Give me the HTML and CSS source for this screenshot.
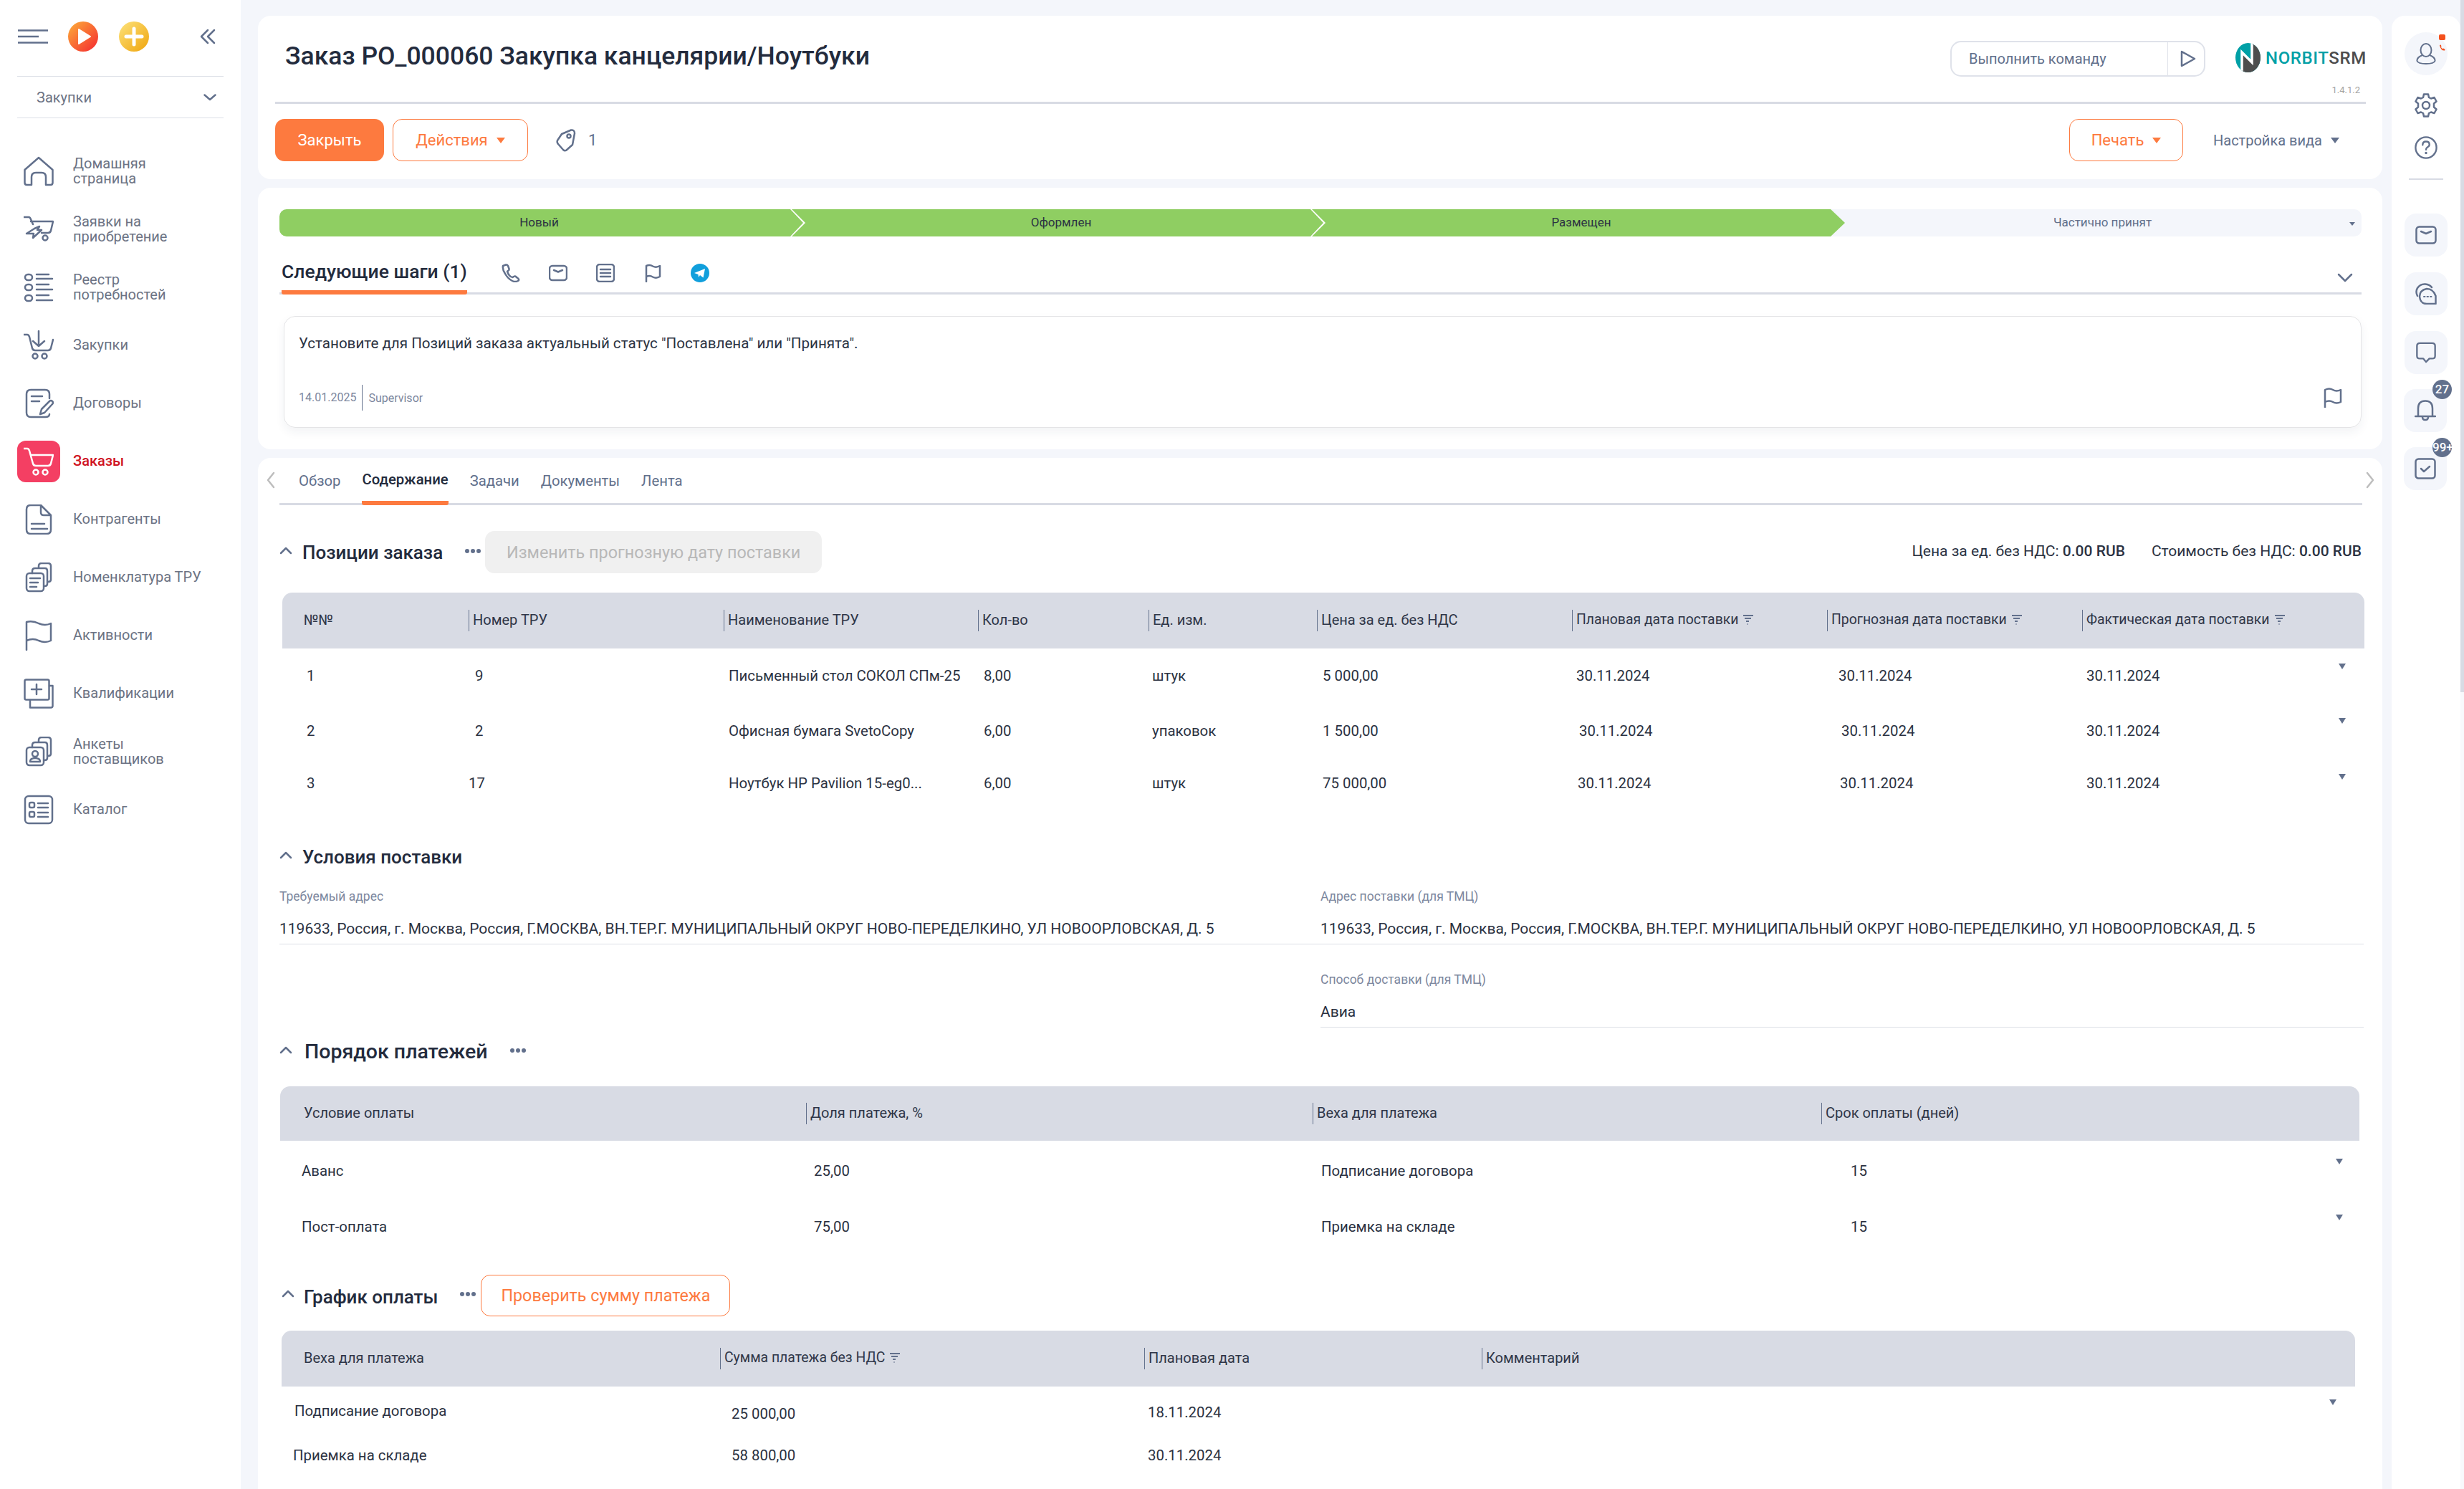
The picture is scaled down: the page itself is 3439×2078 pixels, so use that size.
FILE: index.html
```html
<!DOCTYPE html>
<html lang="ru">
<head>
  <meta charset="UTF-8" />
  <title>Заказ PO_000060</title>
  <link rel="stylesheet" href="styles.css">
</head>
<body>

  <!-- left menu -->
  <aside class="sidebar">
    <div class="side-top">
      <svg class="burger" viewBox="0 0 42 20"><path d="M0 1.5H42M0 10H29M0 18.500H42"/></svg>
      <svg class="round-btn" viewBox="0 0 42 42"><defs><linearGradient id="gp" x1="0" y1="0" x2="1" y2="1"><stop offset="0" stop-color="#fdb03a"/><stop offset="1" stop-color="#f4272f"/></linearGradient></defs><circle cx="21" cy="21" r="21" fill="url(#gp)"/><path d="M15 11 L31 21 L15 31Z" fill="#fff" stroke="#fff" stroke-width="2" stroke-linejoin="round"/></svg>
      <svg class="round-btn second" viewBox="0 0 42 42"><defs><linearGradient id="gy" x1="0" y1="0" x2="1" y2="1"><stop offset="0" stop-color="#fde37c"/><stop offset="1" stop-color="#efa40c"/></linearGradient></defs><circle cx="21" cy="21" r="21" fill="url(#gy)"/><path d="M21 10V32M10 21H32" stroke="#fff" stroke-width="5" stroke-linecap="round"/></svg>
      <svg class="collapse" viewBox="0 0 22 22"><path d="M11 2 L2 11 L11 20M20 2 L11 11 L20 20"/></svg>
    </div>
    <div class="side-select">
      <span>Закупки</span>
      <svg viewBox="0 0 18 10"><path d="M1.500 1.500 L9 8 L16.500 1.500"/></svg>
    </div>
    <nav class="menu">
      <a class="menu-item">
        <svg viewBox="0 0 42 42"><path d="M1.500 19 L21 2 L40.500 19 V37 Q40.500 40 37.500 40 H31 V29 Q31 23 25 23 H17 Q11 23 11 29 V40 H4.500 Q1.500 40 1.500 37Z"/></svg>
        <span>Домашняя<br>страница</span>
      </a>
      <a class="menu-item">
        <svg viewBox="0 0 42 42"><path d="M0 4 H7 Q9 4 10 7 L13 14 M10 10 H41 L38 23 Q37 26 34 26 H25"/><path d="M15 20 L22 17 L19 22 H25 L13 33 L14 27 H4Z"/><circle cx="30" cy="33" r="3.500"/></svg>
        <span>Заявки на<br>приобретение</span>
      </a>
      <a class="menu-item">
        <svg viewBox="0 0 42 42"><rect x="2" y="3" width="10" height="8" rx="4"/><rect x="2" y="17" width="10" height="8" rx="4"/><rect x="2" y="32" width="10" height="8" rx="4"/><path d="M18 3H35M18 9H40M18 17H35M18 24H40M18 32H35M18 39H40"/></svg>
        <span>Реестр<br>потребностей</span>
      </a>
      <a class="menu-item">
        <svg viewBox="0 0 42 42"><path d="M0 6 H5 Q7 6 8 9 L12 25 Q13 28 16 28 H34 Q37 28 38 25 L41 13 M21 1 V22 M13 15 L21 22 L29 15"/><circle cx="16" cy="36" r="3.500"/><circle cx="29" cy="36" r="3.500"/></svg>
        <span>Закупки</span>
      </a>
      <a class="menu-item">
        <svg viewBox="0 0 42 42"><path d="M36 14 V8 Q36 2 30 2 H10 Q4 2 4 8 V34 Q4 40 10 40 H30 Q36 40 36 36"/><path d="M11 11H26M11 18H22"/><path d="M23 36 L25 29 L36 18 Q38 16 40 18 Q42 20 40 22 L29 34Z"/></svg>
        <span>Договоры</span>
      </a>
      <a class="menu-item active">
        <span class="active-box">
          <svg viewBox="0 0 42 42"><path d="M0 3 H5 Q7 3 8 6 L13 24 Q14 27 17 27 H34 Q37 27 38 24 L41 12 H10"/><circle cx="17" cy="36" r="3.500"/><circle cx="30" cy="36" r="3.500"/></svg>
        </span>
        <span>Заказы</span>
      </a>
      <a class="menu-item">
        <svg viewBox="0 0 42 42"><path d="M24 1 H10 Q4 1 4 7 V35 Q4 41 10 41 H32 Q38 41 38 35 V15Z M24 1 V11 Q24 15 28 15 H38"/><path d="M11 27H29M11 34H33"/></svg>
        <span>Контрагенты</span>
      </a>
      <a class="menu-item">
        <svg viewBox="0 0 42 42"><rect x="4" y="15" width="24" height="25" rx="4"/><path d="M12 15 V12 Q12 8 16 8 H30 Q33 8 33 12 V30 Q33 33 29 33 M21 8 V5 Q21 1 25 1 H34 Q38 1 38 5 V24 Q38 27 34 27"/><path d="M9 22H23M9 28H20M9 34H18"/></svg>
        <span>Номенклатура ТРУ</span>
      </a>
      <a class="menu-item">
        <svg viewBox="0 0 42 42"><path d="M4 41 V2 Q13 0 21 4 Q30 8 38 4 V28 Q30 32 21 28 Q13 24 4 28"/></svg>
        <span>Активности</span>
      </a>
      <a class="menu-item">
        <svg viewBox="0 0 42 42"><rect x="1.500" y="1.500" width="34" height="28" rx="2"/><path d="M36 10 H40.500 V38 Q40.500 40.500 38 40.500 H9 V30 M18 8 V22 M11 15 H25"/></svg>
        <span>Квалификации</span>
      </a>
      <a class="menu-item">
        <svg viewBox="0 0 42 42"><rect x="4" y="15" width="24" height="25" rx="4"/><path d="M12 15 V12 Q12 8 16 8 H30 Q33 8 33 12 V30 Q33 33 29 33 M21 8 V5 Q21 1 25 1 H34 Q38 1 38 5 V24 Q38 27 34 27"/><circle cx="16" cy="24" r="4"/><path d="M9 35 Q9 30 16 30 Q23 30 23 35 Z"/></svg>
        <span>Анкеты<br>поставщиков</span>
      </a>
      <a class="menu-item">
        <svg viewBox="0 0 42 42"><rect x="2" y="2" width="38" height="38" rx="5"/><rect x="8" y="11" width="7" height="7" rx="2"/><rect x="8" y="24" width="7" height="7" rx="2"/><path d="M20 12H34M20 18H34M20 25H34M20 31H34"/></svg>
        <span>Каталог</span>
      </a>
    </nav>
  </aside>

  <main class="content">

    <section class="card head-card">
      <div class="head-top">
        <h1>Заказ PO_000060 Закупка канцелярии/Ноутбуки</h1>
        <div class="command">
          <span class="command-text">Выполнить команду</span>
          <svg viewBox="0 0 22 24"><path d="M2 2 L20 12 L2 22Z"/></svg>
        </div>
        <div class="logo-box">
          <div class="logo">
            <svg viewBox="0 0 35 41"><defs><clipPath id="logoclip"><ellipse cx="17.500" cy="20.500" rx="17.500" ry="20.500"/></clipPath></defs><g clip-path="url(#logoclip)"><rect width="35" height="41" fill="#00a0a6"/><path d="M23 0 H35 V41 H9 V14 L23 28Z" fill="#4d4d4d"/><path d="M9 41 V13 L23 27 V0" fill="none" stroke="#fff" stroke-width="3.500" stroke-linecap="butt" stroke-linejoin="miter"/></g></svg>
            <span class="logo-name">NORBIT<b>SRM</b></span>
          </div>
          <div class="version">1.4.1.2</div>
        </div>
      </div>
      <div class="head-actions">
        <button class="btn btn-fill">Закрыть</button>
        <button class="btn btn-line actions-btn">Действия<i class="caret orange"></i></button>
        <svg class="tag" viewBox="0 0 30 32"><path d="M9 7 L22 1.500 Q27 1 27 6 L24 22 L15 30 Q13 31 11 29 L4 21 Q2 19 3 16Z"/><circle cx="19" cy="10" r="2.500"/></svg>
        <span class="tag-count">1</span>
        <button class="btn btn-line print-btn">Печать<i class="caret orange"></i></button>
        <span class="view-set">Настройка вида<i class="caret"></i></span>
      </div>
    </section>

    <section class="card steps-card">
      <div class="steps">
        <div class="step done">Новый</div>
        <div class="step done">Оформлен</div>
        <div class="step done current">Размещен</div>
        <div class="step">Частично принят<i class="caret tiny"></i></div>
      </div>
      <div class="next-head">
        <div class="next-title">Следующие шаги (1)</div>
        <svg class="next-ico first" viewBox="0 0 26 26"><path d="M2 3 L6 1.500 Q8 1 9 3 L10.500 7 Q11 9 9 10 L8 11 Q9 14 11 16.500 Q13 19 15.500 19 L17 18 Q19 17 20.500 18.500 L23.500 21 Q25 23 23 24 Q19 26 15 24 Q9 21 5 14 Q1 8 2 3Z"/></svg>
        <svg class="next-ico" viewBox="0 0 26 26"><rect x="1" y="3" width="24" height="20" rx="4"/><path d="M7 9 L13 11.500 L19 9"/></svg>
        <svg class="next-ico" viewBox="0 0 26 26"><rect x="1" y="1" width="24" height="24" rx="4"/><path d="M6 8H20M6 13H20M6 18H20"/></svg>
        <svg class="next-ico" viewBox="0 0 26 26"><path d="M4 25 V3 Q9 1 13 3.500 Q18 6 23 3 V18 Q18 21 13 18.500 Q9 16 4 18"/></svg>
        <svg class="next-ico" viewBox="0 0 26 26"><circle class="tg-bg" cx="13" cy="13" r="13"/><path class="tg-plane" d="M5 13 L20 7 L17.500 19.500 L13 16 L11 19 L10.500 15Z"/></svg>
        <svg class="next-toggle" viewBox="0 0 22 14"><path d="M2 2 L11 11 L20 2"/></svg>
      </div>
      <div class="note">
        <div class="note-text">Установите для Позиций заказа актуальный статус "Поставлена" или "Принята".</div>
        <div class="note-foot">
          <span class="note-date">14.01.2025</span>
          <span class="note-user">Supervisor</span>
          <svg viewBox="0 0 26 28"><path d="M2 28 V3 Q8 0 13 3 Q18 6 24 3 V20 Q18 23 13 20 Q8 17 2 20"/></svg>
        </div>
      </div>
    </section>

    <section class="card body-card">
      <div class="tabs">
        <svg class="tab-arrow left" viewBox="0 0 12 24"><path d="M10 2 L2 12 L10 22"/></svg>
        <a class="tab">Обзор</a>
        <a class="tab active">Содержание</a>
        <a class="tab">Задачи</a>
        <a class="tab">Документы</a>
        <a class="tab">Лента</a>
        <svg class="tab-arrow right" viewBox="0 0 12 24"><path d="M2 2 L10 12 L2 22"/></svg>
      </div>

      <div class="sec-head first-sec">
        <svg class="sec-chev" viewBox="0 0 18 12"><path d="M2 10 L9 3 L16 10"/></svg>
        <h2>Позиции заказа</h2>
        <span class="dots"><i></i><i></i><i></i></span>
        <button class="btn btn-off">Изменить прогнозную дату поставки</button>
        <div class="totals">
          <span>Цена за ед. без НДС: <b>0.00 RUB</b></span>
          <span>Стоимость без НДС: <b>0.00 RUB</b></span>
        </div>
      </div>

      <div class="tbl tbl-items">
        <div class="tbl-row tbl-head">
          <div class="th th-first">№№</div>
          <div class="th">Номер ТРУ</div>
          <div class="th">Наименование ТРУ</div>
          <div class="th">Кол-во</div>
          <div class="th">Ед. изм.</div>
          <div class="th">Цена за ед. без НДС</div>
          <div class="th th-sort">Плановая дата поставки<svg class="fil" viewBox="0 0 14 14"><path d="M0 1H14M2 5H11M4 9H8M5.500 13H6.500"/></svg></div>
          <div class="th th-sort">Прогнозная дата поставки<svg class="fil" viewBox="0 0 14 14"><path d="M0 1H14M2 5H11M4 9H8M5.500 13H6.500"/></svg></div>
          <div class="th th-sort">Фактическая дата поставки<svg class="fil" viewBox="0 0 14 14"><path d="M0 1H14M2 5H11M4 9H8M5.500 13H6.500"/></svg></div>
        </div>
        <div class="tbl-row item-row r1">
          <div>1</div><div>9</div><div>Письменный стол СОКОЛ СПм-25</div><div>8,00</div><div>штук</div><div>5 000,00</div>
          <div>30.11.2024</div><div>30.11.2024</div><div>30.11.2024</div>
          <div class="row-menu"><i class="caret"></i></div>
        </div>
        <div class="tbl-row item-row r2">
          <div>2</div><div>2</div><div>Офисная бумага SvetoCopy</div><div>6,00</div><div>упаковок</div><div>1 500,00</div>
          <div>30.11.2024</div><div>30.11.2024</div><div>30.11.2024</div>
          <div class="row-menu"><i class="caret"></i></div>
        </div>
        <div class="tbl-row item-row r3">
          <div>3</div><div>17</div><div>Ноутбук HP Pavilion 15-eg0...</div><div>6,00</div><div>штук</div><div>75 000,00</div>
          <div>30.11.2024</div><div>30.11.2024</div><div>30.11.2024</div>
          <div class="row-menu"><i class="caret"></i></div>
        </div>
      </div>

      <div class="sec-head delivery-sec">
        <svg class="sec-chev" viewBox="0 0 18 12"><path d="M2 10 L9 3 L16 10"/></svg>
        <h2>Условия поставки</h2>
      </div>
      <div class="fields">
        <div class="field">
          <div class="field-label">Требуемый адрес</div>
          <div class="field-value">119633, Россия, г. Москва, Россия, Г.МОСКВА, ВН.ТЕР.Г. МУНИЦИПАЛЬНЫЙ ОКРУГ НОВО-ПЕРЕДЕЛКИНО, УЛ НОВООРЛОВСКАЯ, Д. 5</div>
        </div>
        <div class="field">
          <div class="field-label">Адрес поставки (для ТМЦ)</div>
          <div class="field-value">119633, Россия, г. Москва, Россия, Г.МОСКВА, ВН.ТЕР.Г. МУНИЦИПАЛЬНЫЙ ОКРУГ НОВО-ПЕРЕДЕЛКИНО, УЛ НОВООРЛОВСКАЯ, Д. 5</div>
        </div>
        <div class="field field-empty"></div>
        <div class="field field-low">
          <div class="field-label">Способ доставки (для ТМЦ)</div>
          <div class="field-value">Авиа</div>
        </div>
      </div>

      <div class="sec-head pay-sec">
        <svg class="sec-chev" viewBox="0 0 18 12"><path d="M2 10 L9 3 L16 10"/></svg>
        <h2>Порядок платежей</h2>
        <span class="dots"><i></i><i></i><i></i></span>
      </div>
      <div class="tbl tbl-pay">
        <div class="tbl-row tbl-head">
          <div class="th th-first">Условие оплаты</div>
          <div class="th">Доля платежа, %</div>
          <div class="th">Веха для платежа</div>
          <div class="th">Срок оплаты (дней)</div>
        </div>
        <div class="tbl-row pay-row r1">
          <div>Аванс</div><div>25,00</div><div>Подписание договора</div><div>15</div>
          <div class="row-menu"><i class="caret"></i></div>
        </div>
        <div class="tbl-row pay-row r2">
          <div>Пост-оплата</div><div>75,00</div><div>Приемка на складе</div><div>15</div>
          <div class="row-menu"><i class="caret"></i></div>
        </div>
      </div>

      <div class="sec-head plan-sec">
        <svg class="sec-chev" viewBox="0 0 18 12"><path d="M2 10 L9 3 L16 10"/></svg>
        <h2>График оплаты</h2>
        <span class="dots"><i></i><i></i><i></i></span>
        <button class="btn btn-line check-btn">Проверить сумму платежа</button>
      </div>
      <div class="tbl tbl-plan">
        <div class="tbl-row tbl-head">
          <div class="th th-first">Веха для платежа</div>
          <div class="th th-sort">Сумма платежа без НДС<svg class="fil" viewBox="0 0 14 14"><path d="M0 1H14M2 5H11M4 9H8M5.500 13H6.500"/></svg></div>
          <div class="th">Плановая дата</div>
          <div class="th">Комментарий</div>
        </div>
        <div class="tbl-row plan-row r1">
          <div>Подписание договора</div><div>25 000,00</div><div>18.11.2024</div><div></div>
          <div class="row-menu"><i class="caret"></i></div>
        </div>
        <div class="tbl-row plan-row r2">
          <div>Приемка на складе</div><div>58 800,00</div><div>30.11.2024</div><div></div>
        </div>
      </div>
    </section>
  </main>

  <!-- right rail -->
  <aside class="rail">
    <div class="user">
      <svg viewBox="0 0 28 30"><ellipse cx="14" cy="10" rx="7.500" ry="9"/><path d="M9 17 Q1 20 1.500 25 Q3 29 14 29 Q25 29 26.500 25 Q27 20 19 17"/></svg>
      <span class="mini-mail"></span>
      <svg class="mini-phone" viewBox="0 0 10 10"><path d="M1 1 L3 0.500 L4 3 L3 4 Q4 6 6 7 L7 6 L9.500 7.500 L9 9.500 Q3 10 1 1Z"/></svg>
    </div>
    <svg class="rail-ico gear" viewBox="0 0 32 34"><path d="M13 1.500 H19 L20 6 L23 7.500 L27.500 6 L30.500 11.500 L27 14.500 V19.500 L30.500 22.500 L27.500 28 L23 26.500 L20 28 L19 32.500 H13 L12 28 L9 26.500 L4.500 28 L1.500 22.500 L5 19.500 V14.500 L1.500 11.500 L4.500 6 L9 7.500 L12 6Z"/><circle cx="16" cy="17" r="5"/></svg>
    <svg class="rail-ico help" viewBox="0 0 34 34"><circle cx="17" cy="17" r="15.500"/><path d="M12 13 Q12 8 17 8 Q22 8 22 12.500 Q22 15 19 16.500 Q17 18 17 20"/><circle class="dot" cx="17" cy="25" r="1.800"/></svg>
    <div class="rail-line"></div>
    <div class="rail-box">
      <svg viewBox="0 0 30 26"><rect x="1.500" y="1.500" width="27" height="23" rx="4"/><path d="M8 8 L15 11 L22 8"/></svg>
    </div>
    <div class="rail-box">
      <svg viewBox="0 0 30 30"><path d="M3 18 Q0 12 3 7 Q7 1 14 1.500 Q20 2 23 6"/><path d="M16 29 Q7 29 6 19 Q6 10 16 8 Q25 8 28.500 18 V29Z"/><path class="d" d="M12 19H13.500M16.500 19H18M21 19H22.500"/></svg>
    </div>
    <div class="rail-box">
      <svg viewBox="0 0 30 32"><path d="M6 2 H24 Q28.500 2 28.500 6 V21 Q28.500 25 24 25 H20 L15 30 L11 25 H6 Q1.500 25 1.500 21 V6 Q1.500 2 6 2Z"/></svg>
    </div>
    <div class="rail-box shift">
      <svg viewBox="0 0 30 30"><path d="M1 23 H29 M5 23 V12 Q5 1.500 15 1.500 Q25 1.500 25 12 V23 M11 24 Q11 28 15 28 Q19 28 19 24"/></svg>
      <span class="badge">27</span>
    </div>
    <div class="rail-box shift">
      <svg viewBox="0 0 30 30"><rect x="1.500" y="1.500" width="27" height="27" rx="4"/><path d="M9 15 L13 19 L21 12"/></svg>
      <span class="badge">99+</span>
    </div>
  </aside>

  <div class="scroll"><div class="scroll-thumb"></div></div>

</body>
</html>
```
FILE: styles.css
```css
* {
  box-sizing: border-box;
}

html, body {
  margin: 0;
  height: 2078px;
  overflow: hidden;
}

body {
  display: flex;
  background: #f4f6fb;
  font-family: Roboto, "Noto Sans", sans-serif;
  font-size: 20px;
  color: #2b3242;
}

svg {
  fill: none;
  stroke: #62708c;
  stroke-width: 2.5;
  stroke-linecap: round;
  stroke-linejoin: round;
  flex: none;
}

.caret {
  display: inline-block;
  width: 0;
  height: 0;
  margin-left: 12px;
  border-left: 6px solid transparent;
  border-right: 6px solid transparent;
  border-top: 8px solid #62708c;
  vertical-align: 3px;
}

.caret.orange {
  border-top-color: #fd7a3f;
}

.caret.tiny {
  position: absolute;
  right: 9px;
  top: 18px;
  border-width: 5px 4px 0;
  margin: 0;
}

/* sidebar */
.sidebar {
  width: 336px;
  flex: none;
  background: #fff;
  margin-right: 24px;
  padding-left: 24px;
}

.side-top {
  width: 288px;
  height: 107px;
  display: flex;
  align-items: center;
  border-bottom: 1px solid #dcdfe6;
  padding: 0 0 4px 1px;
}

.burger {
  width: 42px;
  height: 20px;
  stroke-width: 2.5;
  stroke-linecap: butt;
}

.round-btn {
  width: 42px;
  height: 42px;
  margin-left: 28px;
  stroke: none;
}

.round-btn.second {
  margin-left: 29px;
}

.collapse {
  width: 22px;
  height: 22px;
  margin-left: 71px;
}

.side-select {
  width: 288px;
  height: 58px;
  display: flex;
  align-items: center;
  justify-content: space-between;
  padding: 0 10px 0 27px;
  border-bottom: 1px solid #dcdfe6;
  color: #6c7384;
}

.side-select svg {
  width: 18px;
  height: 10px;
}

.menu {
  margin-top: 33px;
}

.menu-item {
  display: flex;
  align-items: center;
  height: 81px;
  padding-left: 9px;
  color: #6c7384;
  line-height: 21px;
}

.menu-item svg {
  width: 42px;
  height: 42px;
  margin-right: 27px;
}

.menu-item.active {
  padding-left: 0;
  color: #cf1322;
  font-weight: 500;
}

.active-box {
  width: 60px;
  height: 58px;
  border-radius: 12px;
  background: #f43f63;
  display: flex;
  align-items: center;
  justify-content: center;
  margin-right: 18px;
}

.active-box svg {
  margin: 0;
  stroke: #fff;
}

/* main column */
.content {
  width: 2965px;
  flex: none;
  padding-top: 22px;
  display: flex;
  flex-direction: column;
  gap: 12px;
}

.card {
  background: #fff;
  border-radius: 18px;
}

.head-card {
  height: 228px;
  padding: 0 23px 0 24px;
}

.head-top {
  height: 123px;
  display: flex;
  align-items: flex-start;
  padding-top: 34px;
  border-bottom: 3px solid #d8dbe4;
}

h1 {
  margin: 0 0 0 14px;
  font-size: 35.5px;
  font-weight: 500;
  line-height: 44px;
  color: #232b3d;
}

.command {
  margin-left: auto;
  width: 356px;
  height: 50px;
  margin-top: 1px;
  border: 2px solid #dfe2ea;
  border-radius: 15px;
  display: flex;
  align-items: center;
  padding-left: 24px;
  color: #62708c;
}

.command-text {
  width: 278px;
  height: 100%;
  line-height: 46px;
  border-right: 1px solid #dfe2ea;
  margin: 0;
}

.command svg {
  width: 22px;
  height: 24px;
  margin-left: 17px;
}

.logo-box {
  width: 182px;
  margin-left: 42px;
}

.logo {
  display: flex;
  align-items: center;
  margin-top: 4px;
}

.logo svg {
  width: 35px;
  height: 41px;
  stroke: none;
}

.logo-name {
  margin-left: 7px;
  font-size: 24px;
  font-weight: 500;
  letter-spacing: 0.6px;
  color: #00a0a6;
}

.logo-name b {
  font-weight: 500;
  color: #4d4d4d;
}

.version {
  margin-top: 17px;
  padding-right: 8px;
  text-align: right;
  font-size: 13px;
  color: #a3a3a3;
}

.head-actions {
  display: flex;
  align-items: center;
  padding-top: 21px;
}

.btn {
  height: 59px;
  border-radius: 13px;
  font: inherit;
  padding: 0;
}

.btn-fill {
  width: 152px;
  background: #fd7a3f;
  border: none;
  color: #fff;
  font-size: 22px;
}

.btn-line {
  background: #fff;
  border: 1.5px solid #fd7a3f;
  color: #fd7a3f;
  font-size: 22px;
}

.actions-btn {
  width: 189px;
  margin-left: 12px;
}

.tag {
  width: 30px;
  height: 32px;
  margin-left: 38px;
}

.tag-count {
  margin-left: 16px;
  font-size: 22px;
  color: #62708c;
}

.print-btn {
  width: 159px;
  margin-left: auto;
}

.view-set {
  margin: 0 37px 0 42px;
  color: #62708c;
  font-size: 20px;
}

/* status line + next steps */
.steps-card {
  height: 365px;
  padding: 30px 29px 0 30px;
}

.steps {
  display: flex;
  height: 38px;
  background: #f4f6fb;
  border-radius: 10px;
  overflow: hidden;
  font-size: 17px;
  line-height: 36px;
  text-align: center;
  color: #62708c;
}

.step {
  position: relative;
  width: 726px;
  padding-left: 30px;
}

.step:first-child {
  width: 713px;
  padding-left: 12px;
}

.step:last-child {
  width: 741px;
  padding-left: 18px;
}

.step.done {
  background: #8fce62;
  color: #2b3242;
}

.step.done::after {
  content: "";
  position: absolute;
  z-index: 1;
  left: 100%;
  top: 0;
  width: 20px;
  height: 38px;
  background: #8fce62;
  clip-path: polygon(0 0, 100% 50%, 0 100%);
}

.step.done:not(.current)::before {
  content: "";
  position: absolute;
  z-index: 2;
  left: 100%;
  top: 0;
  width: 21px;
  height: 38px;
  background: #fff;
  clip-path: polygon(0 0, 2px 0, 21px 50%, 2px 100%, 0 100%, 18px 50%);
}

.next-head {
  height: 81px;
  display: flex;
  align-items: stretch;
  border-bottom: 3px solid #d8dbe4;
}

.next-title {
  margin: 0 48px -3px 3px;
  display: flex;
  align-items: center;
  padding-top: 21px;
  border-bottom: 6px solid #fd7a3f;
  border-radius: 3px;
  font-size: 26.5px;
  font-weight: 500;
  color: #232b3d;
}

.next-ico {
  width: 26px;
  height: 26px;
  margin: 38px 40px 0 0;
}

.tg-bg {
  fill: #119fdc;
  stroke: none;
}

.tg-plane {
  fill: #fff;
  stroke: none;
}

.next-toggle {
  width: 22px;
  height: 14px;
  margin: 51px 12px 0 auto;
}

.note {
  height: 156px;
  margin: 30px 0 0 6px;
  padding: 23px 20px 0;
  border: 1.5px solid #e4e4e6;
  border-radius: 16px;
  box-shadow: 0 6px 14px rgba(40, 50, 80, 0.06);
}

.note-text {
  font-size: 20.6px;
  line-height: 28px;
}

.note-foot {
  display: flex;
  align-items: center;
  height: 36px;
  margin-top: 44px;
  font-size: 16px;
  color: #7c879e;
}

.note-date {
  padding-right: 8px;
  height: 36px;
  line-height: 36px;
  border-right: 1px solid #62708c;
}

.note-user {
  margin-left: 8px;
}

.note-foot svg {
  width: 26px;
  height: 28px;
  margin-left: auto;
  margin-right: 6px;
}

/* tabs */
.body-card {
  flex: 1;
  border-radius: 18px 18px 0 0;
  padding: 0 29px 0 30px;
}

.tabs {
  height: 66px;
  display: flex;
  align-items: center;
  gap: 30px;
  border-bottom: 3px solid #d8dbe4;
  padding-bottom: 1px;
  margin-right: -1px;
}

.tab-arrow {
  width: 12px;
  height: 24px;
  stroke: #bdbdbd;
  stroke-width: 2.500;
}

.tab-arrow.left {
  margin: 0 3px 0 -18px;
}

.tab-arrow.right {
  margin: 0 -17px 0 auto;
}

.tab {
  height: 100%;
  display: flex;
  align-items: center;
  color: #62708c;
  font-size: 20.3px;
  padding-top: 2px;
}

.tab.active {
  color: #232b3d;
  font-weight: 500;
  height: 66px;
  margin-bottom: -4px;
  border-bottom: 6px solid #fd7a3f;
  border-radius: 3px;
  padding-top: 0;
}

/* section headers */
.sec-head {
  display: flex;
  align-items: center;
}

.sec-chev {
  width: 18px;
  height: 12px;
  margin: -6px 14px 0 0;
}

h2 {
  margin: 0;
  font-size: 26px;
  font-weight: 500;
  line-height: 40px;
  color: #232b3d;
}

.dots {
  display: flex;
  gap: 2px;
  margin-left: 31px;
  margin-top: -4px;
}

.dots i {
  width: 6px;
  height: 6px;
  border-radius: 50%;
  background: #62708c;
}

.first-sec {
  margin-top: 36px;
  height: 59px;
}

.btn-off {
  width: 470px;
  margin-left: 6px;
  background: #f0f0f0;
  border: none;
  color: #b8b8b8;
  font-size: 23.4px;
}

.totals {
  margin-left: auto;
  display: flex;
  gap: 37px;
  margin-top: -4px;
  font-size: 21px;
}

.totals b {
  font-weight: 500;
}

/* tables */
.tbl-row {
  display: grid;
  position: relative;
}

.tbl-head {
  background: #d8dbe4;
  border-radius: 14px 14px 0 0;
}

.th {
  align-self: center;
  height: 30px;
  line-height: 28px;
  padding-left: 5px;
  border-left: 1px solid #62708c;
  white-space: nowrap;
  color: #2f3648;
}

.th-first {
  border-left: none;
  padding-left: 30px;
}

.th-sort {
  font-size: 19.4px;
}

.fil {
  width: 14px;
  height: 14px;
  margin-left: 7px;
  stroke-width: 2;
  stroke-linecap: butt;
  vertical-align: -1px;
}

.row-menu {
  position: absolute;
  line-height: 0;
}

.row-menu .caret {
  margin: 0;
  border-width: 8px 5px 0;
  vertical-align: top;
}

.tbl-row > div:not(.th):not(.row-menu) {
  align-self: center;
  font-size: 20.4px;
  white-space: nowrap;
}

/* order items */
.tbl-items {
  margin: 27px 0 0 4px;
  width: 2906px;
}

.tbl-items .tbl-row {
  grid-template-columns: 260px 356px 355px 238px 235px 356px 356px 356px 394px;
}

.tbl-items .tbl-head {
  height: 78px;
}

.item-row.r1 { height: 76px; }
.item-row.r2 { height: 78px; }
.item-row.r3 { height: 68px; }

.item-row > div:nth-child(1) { padding-left: 34px; }
.item-row > div:nth-child(2) { padding-left: 9px; }
.item-row > div:nth-child(3) { padding-left: 7px; }
.item-row > div:nth-child(4) { padding-left: 8px; }
.item-row > div:nth-child(5) { padding-left: 5px; }
.item-row > div:nth-child(6) { padding-left: 8px; }
.item-row > div:nth-child(7) { padding-left: 6px; }
.item-row > div:nth-child(8) { padding-left: 16px; }
.item-row > div:nth-child(9) { padding-left: 6px; }

.item-row.r2 > div:nth-child(7) { padding-left: 10px; }
.item-row.r2 > div:nth-child(8) { padding-left: 20px; }
.item-row.r3 > div:nth-child(2) { padding-left: 0; }
.item-row.r3 > div:nth-child(7) { padding-left: 8px; }
.item-row.r3 > div:nth-child(8) { padding-left: 18px; }

.item-row .row-menu {
  top: 21px;
  right: 26px;
}

/* delivery */
.delivery-sec {
  margin-top: 49px;
  height: 40px;
}

.fields {
  display: grid;
  grid-template-columns: 1453px 1fr;
  margin-top: 23px;
  margin-right: -3px;
}

.field {
  border-bottom: 1.5px solid #dcdfe6;
  padding-bottom: 6px;
}

.field-empty {
  border-bottom: none;
}

.field-low {
  margin-top: 37px;
}

.field-label {
  font-size: 17.5px;
  line-height: 24px;
  color: #7c879e;
}

.field-value {
  margin-top: 18px;
  font-size: 21px;
  line-height: 30px;
  white-space: nowrap;
}

/* payment order */
.pay-sec {
  margin-top: 14px;
  height: 40px;
}

.pay-sec .sec-chev {
  margin-right: 17px;
}

.pay-sec h2 {
  font-size: 28.5px;
}

.tbl-pay {
  margin: 28px 0 0 1px;
  width: 2902px;
}

.tbl-pay .tbl-row {
  grid-template-columns: 734px 707px 710px 751px;
}

.tbl-pay .tbl-head {
  height: 76px;
}

.tbl-pay .th-first {
  padding-left: 33px;
}

.pay-row.r1 { height: 84px; }
.pay-row.r2 { height: 72px; }

.pay-row > div:nth-child(1) { padding-left: 30px; }
.pay-row > div:nth-child(2) { padding-left: 11px; }
.pay-row > div:nth-child(3) { padding-left: 12px; }
.pay-row > div:nth-child(4) { padding-left: 41px; }

.pay-row .row-menu {
  top: 25px;
  right: 23px;
}

.pay-row.r2 .row-menu {
  top: 19px;
}

/* payment schedule */
.plan-sec {
  margin-top: 31px;
  height: 58px;
  padding-left: 3px;
}

.plan-sec h2 {
  margin-left: -1px;
  padding-top: 3px;
}

.check-btn {
  width: 348px;
  height: 58px;
  margin-left: 7px;
  font-size: 23.3px;
}

.tbl-plan {
  margin: 20px 0 0 3px;
  width: 2894px;
}

.tbl-plan .tbl-row {
  grid-template-columns: 612px 592px 471px 1219px;
}

.tbl-plan .tbl-head {
  height: 78px;
}

.tbl-plan .th-first {
  padding-left: 31px;
}

.plan-row.r1 { height: 67px; }
.plan-row.r2 { height: 58px; }

.plan-row > div:nth-child(1) { padding-left: 18px; }
.plan-row > div:nth-child(2) { padding-left: 16px; }
.plan-row > div:nth-child(3) { padding-left: 5px; }

.plan-row.r1 > div:nth-child(2) { margin-top: 9px; }
.plan-row.r1 > div:nth-child(3) { margin-top: 5px; }
.plan-row.r2 > div:nth-child(1) { padding-left: 16px; }

.plan-row .row-menu {
  top: 18px;
  right: 26px;
}

/* right rail */
.rail {
  width: 96px;
  flex: none;
  margin: 22px 0 0 13px;
  padding-top: 23px;
  background: #fff;
  border-radius: 18px 18px 0 0;
  display: flex;
  flex-direction: column;
  align-items: center;
}

.user {
  position: relative;
  width: 60px;
  height: 60px;
  border-radius: 50%;
  background: #f4f6fb;
  display: flex;
  align-items: center;
  justify-content: center;
}

.user > svg:first-child {
  width: 28px;
  height: 30px;
  stroke-width: 2;
}

.mini-mail {
  position: absolute;
  right: 3px;
  top: 3px;
  width: 9px;
  height: 8px;
  border-radius: 2px;
  background: #f4511e;
}

.mini-phone {
  position: absolute;
  right: 3px;
  top: 17px;
  width: 9px;
  height: 9px;
  stroke: none;
  fill: #f4511e;
}

.rail-ico {
  width: 32px;
  height: 34px;
}

.gear {
  margin-top: 25px;
}

.help {
  margin-top: 25px;
}

.help .dot {
  fill: #62708c;
  stroke: none;
}

.rail-line {
  width: 48px;
  height: 2px;
  background: #d8dbe4;
  margin-top: 26px;
}

.rail-box {
  position: relative;
  width: 60px;
  height: 60px;
  margin-top: 22px;
  border-radius: 16px;
  background: #f4f6fb;
  display: flex;
  align-items: center;
  justify-content: center;
}

.rail-box svg {
  width: 30px;
  height: 30px;
}

.rail-line + .rail-box {
  margin-top: 47px;
}

.rail-box .d {
  stroke-width: 2;
}

.rail-box.shift {
  left: -1px;
  margin-top: 21px;
}

.badge {
  position: absolute;
  right: -7px;
  top: -13px;
  width: 27px;
  height: 27px;
  border-radius: 50%;
  background: #62708c;
  color: #fff;
  font-size: 17px;
  font-weight: 500;
  line-height: 27px;
  text-align: center;
  white-space: nowrap;
}

/* page scroll */
.scroll {
  width: 5px;
  flex: none;
  background: #f8f9fc;
}

.scroll-thumb {
  height: 966px;
  background: #d8dbe4;
}
```
